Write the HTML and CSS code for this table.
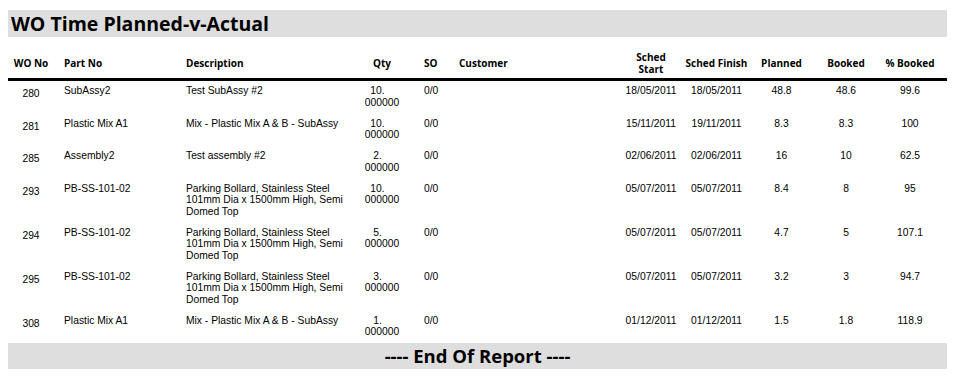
FILE: index.html
```html
<!DOCTYPE html>
<html>
<head>
<meta charset="utf-8">
<title>WO Time Planned-v-Actual</title>
<link rel="stylesheet" href="styles.css">
</head>
<body>
<div class="report">
  <h1 class="title">WO Time Planned-v-Actual</h1>
  <table class="grid">
    <colgroup>
      <col class="c-wo"><col class="c-part"><col class="c-desc"><col class="c-qty"><col class="c-so"><col class="c-cust"><col class="c-start"><col class="c-fin"><col class="c-plan"><col class="c-book"><col class="c-pct">
    </colgroup>
    <thead>
      <tr>
        <th class="ctr">WO No</th>
        <th class="lft part">Part No</th>
        <th class="lft desc">Description</th>
        <th class="ctr">Qty</th>
        <th class="lft so">SO</th>
        <th class="lft cust">Customer</th>
        <th class="ctr">Sched<br>Start</th>
        <th class="ctr">Sched Finish</th>
        <th class="ctr">Planned</th>
        <th class="ctr">Booked</th>
        <th class="ctr pct">% Booked</th>
      </tr>
    </thead>
    <tbody>
      <tr>
        <td class="ctr wo">280</td><td class="part">SubAssy2</td><td class="desc">Test SubAssy #2</td>
        <td class="ctr"><span class="qi">10.</span><br>000000</td><td class="so">0/0</td><td class="cust"></td>
        <td class="ctr">18/05/2011</td><td class="ctr">18/05/2011</td><td class="ctr">48.8</td><td class="ctr">48.6</td><td class="ctr pct">99.6</td>
      </tr>
      <tr>
        <td class="ctr wo">281</td><td class="part">Plastic Mix A1</td><td class="desc">Mix - Plastic Mix A &amp; B - SubAssy</td>
        <td class="ctr"><span class="qi">10.</span><br>000000</td><td class="so">0/0</td><td class="cust"></td>
        <td class="ctr">15/11/2011</td><td class="ctr">19/11/2011</td><td class="ctr">8.3</td><td class="ctr">8.3</td><td class="ctr pct">100</td>
      </tr>
      <tr>
        <td class="ctr wo">285</td><td class="part">Assembly2</td><td class="desc">Test assembly #2</td>
        <td class="ctr"><span class="qi">2.</span><br>000000</td><td class="so">0/0</td><td class="cust"></td>
        <td class="ctr">02/06/2011</td><td class="ctr">02/06/2011</td><td class="ctr">16</td><td class="ctr">10</td><td class="ctr pct">62.5</td>
      </tr>
      <tr>
        <td class="ctr wo">293</td><td class="part">PB-SS-101-02</td><td class="desc">Parking Bollard, Stainless Steel 101mm Dia x 1500mm High, Semi Domed Top</td>
        <td class="ctr"><span class="qi">10.</span><br>000000</td><td class="so">0/0</td><td class="cust"></td>
        <td class="ctr">05/07/2011</td><td class="ctr">05/07/2011</td><td class="ctr">8.4</td><td class="ctr">8</td><td class="ctr pct">95</td>
      </tr>
      <tr>
        <td class="ctr wo">294</td><td class="part">PB-SS-101-02</td><td class="desc">Parking Bollard, Stainless Steel 101mm Dia x 1500mm High, Semi Domed Top</td>
        <td class="ctr"><span class="qi">5.</span><br>000000</td><td class="so">0/0</td><td class="cust"></td>
        <td class="ctr">05/07/2011</td><td class="ctr">05/07/2011</td><td class="ctr">4.7</td><td class="ctr">5</td><td class="ctr pct">107.1</td>
      </tr>
      <tr>
        <td class="ctr wo">295</td><td class="part">PB-SS-101-02</td><td class="desc">Parking Bollard, Stainless Steel 101mm Dia x 1500mm High, Semi Domed Top</td>
        <td class="ctr"><span class="qi">3.</span><br>000000</td><td class="so">0/0</td><td class="cust"></td>
        <td class="ctr">05/07/2011</td><td class="ctr">05/07/2011</td><td class="ctr">3.2</td><td class="ctr">3</td><td class="ctr pct">94.7</td>
      </tr>
      <tr>
        <td class="ctr wo">308</td><td class="part">Plastic Mix A1</td><td class="desc">Mix - Plastic Mix A &amp; B - SubAssy</td>
        <td class="ctr"><span class="qi">1.</span><br>000000</td><td class="so">0/0</td><td class="cust"></td>
        <td class="ctr">01/12/2011</td><td class="ctr">01/12/2011</td><td class="ctr">1.5</td><td class="ctr">1.8</td><td class="ctr pct">118.9</td>
      </tr>
    </tbody>
  </table>
  <div class="footer">---- End Of Report ----</div>
</div>
</body>
</html>
```
FILE: styles.css
```css
html, body {
  margin: 0;
  padding: 0;
  background: #ffffff;
}
body {
  padding: 10px 9px 0 8px;
  color: #000;
  font-family: "Liberation Sans", Arial, sans-serif;
}
.report {
  width: 939px;
}
.title {
  margin: 0;
  height: 27px;
  line-height: 27px;
  padding-left: 3px;
  background: #dedede;
  font-family: "Open Sans", "DejaVu Sans", sans-serif;
  font-weight: 700;
  font-size: 19.5px;
  color: #000;
}
.grid {
  margin-top: 10px;
  width: 939px;
  table-layout: fixed;
  border-collapse: collapse;
  border-spacing: 0;
}
.c-wo { width: 46px; }
.c-part { width: 128px; }
.c-desc { width: 168px; }
.c-qty { width: 64px; }
.c-so { width: 41px; }
.c-cust { width: 163px; }
.c-start { width: 66px; }
.c-fin { width: 65px; }
.c-plan { width: 65px; }
.c-book { width: 64px; }
.c-pct { width: 69px; }

.grid th {
  font-family: "Open Sans", "DejaVu Sans", sans-serif;
  font-weight: 700;
  font-size: 10px;
  line-height: 12px;
  padding: 3.5px 0;
  vertical-align: middle;
  border-bottom: 3px solid #000;
  white-space: nowrap;
}
.grid td {
  font-size: 10.3px;
  line-height: 11.5px;
  padding: 4px 0 5.5px 0;
  vertical-align: top;
}
.ctr { text-align: center; }
.lft { text-align: left; }
.part { padding-left: 10px !important; }
.desc { padding-left: 4px !important; }
.so { padding-left: 10px !important; }
.cust { padding-left: 4px !important; }
.pct { padding-right: 5px !important; }
.grid td.wo { padding-top: 7px; }
.qi { padding-right: 9px; }
.footer {
  height: 26px;
  line-height: 26px;
  background: #dedede;
  text-align: center;
  font-family: "Open Sans", "DejaVu Sans", sans-serif;
  font-weight: 700;
  font-size: 18.5px;
}
```
